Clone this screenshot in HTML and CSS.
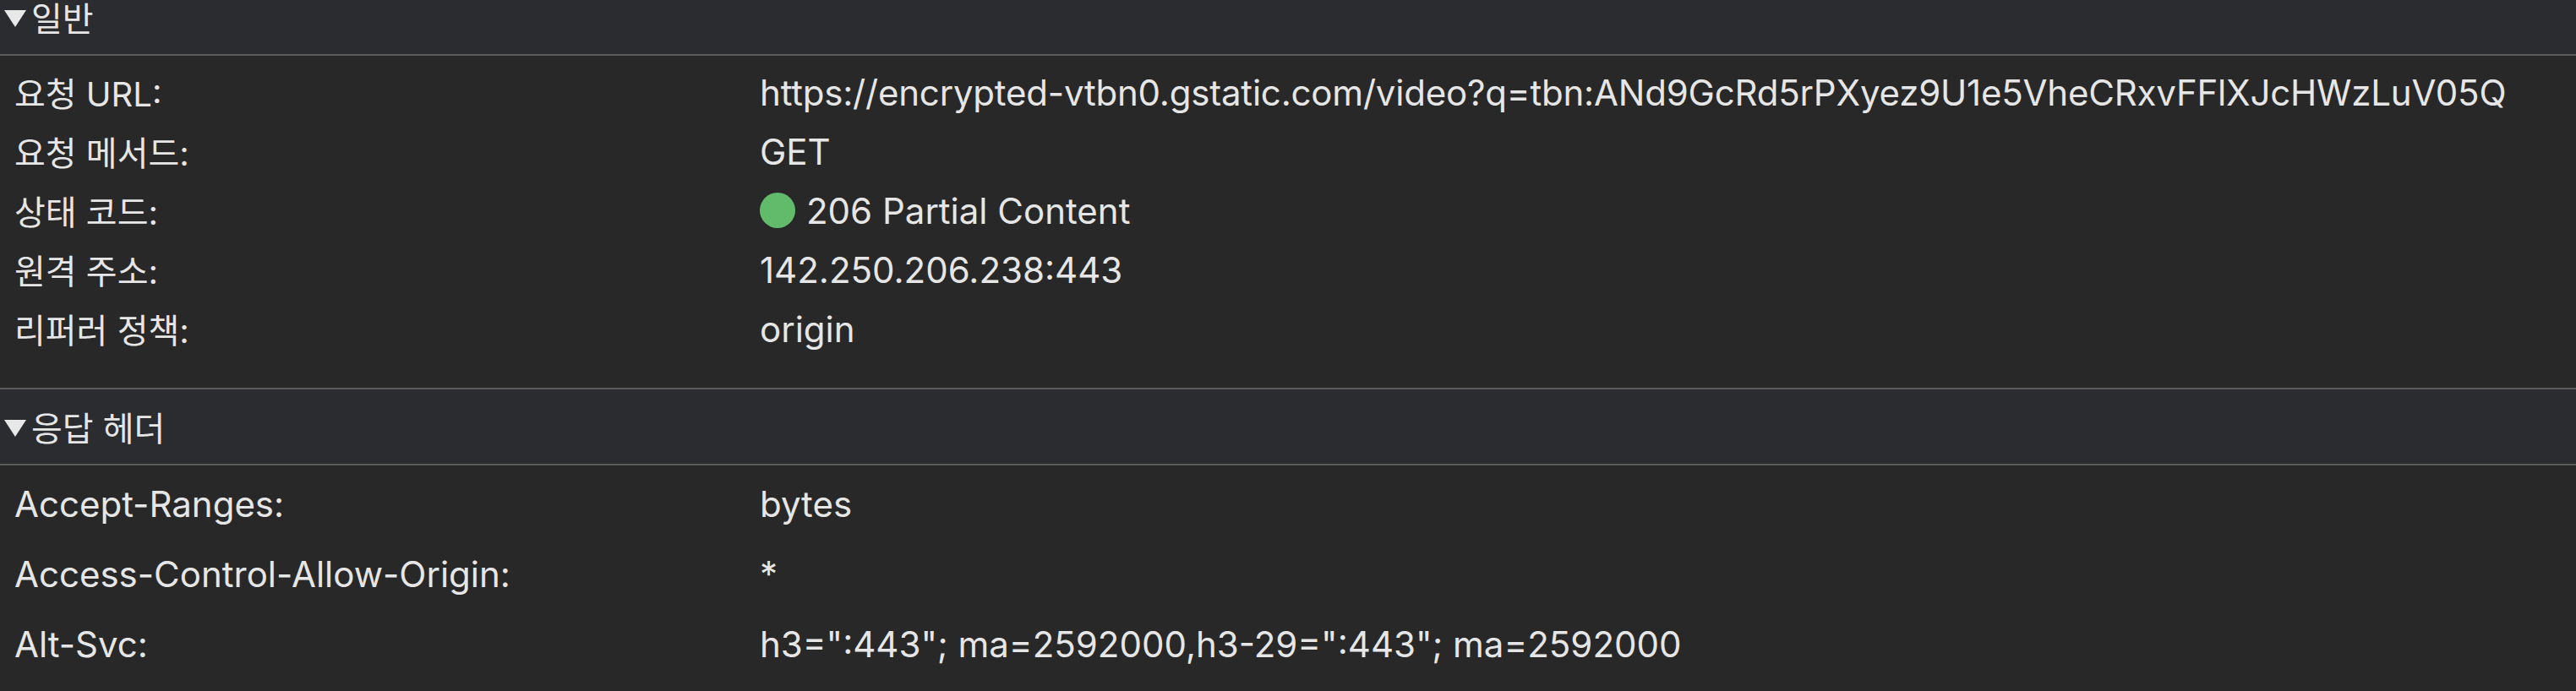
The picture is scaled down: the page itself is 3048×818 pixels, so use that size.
FILE: index.html
```html
<!DOCTYPE html>
<html lang="ko">
<head>
<meta charset="utf-8">
<title>Network details</title>
<link rel="stylesheet" href="styles.css">
</head>
<body>
<div class="panel">
  <section class="sec">
    <div class="sec-head">
      <svg class="tri" viewBox="0 0 26 20" width="26" height="20"><polygon points="0,0 26,0 13,20" fill="#e8e8e8"/></svg>
      <span>일반</span>
    </div>
    <div class="rows general">
      <div class="k ko">요청 URL:</div><div class="v url">https://encrypted-vtbn0.gstatic.com/video?q=tbn:ANd9GcRd5rPXyez9U1e5VheCRxvFFlXJcHWzLuV05Q</div>
      <div class="k ko">요청 메서드:</div><div class="v">GET</div>
      <div class="k ko">상태 코드:</div><div class="v"><span class="dot"></span>206 Partial Content</div>
      <div class="k ko">원격 주소:</div><div class="v">142.250.206.238:443</div>
      <div class="k ko">리퍼러 정책:</div><div class="v">origin</div>
    </div>
  </section>
  <section class="sec">
    <div class="sec-head">
      <svg class="tri" viewBox="0 0 26 20" width="26" height="20"><polygon points="0,0 26,0 13,20" fill="#e8e8e8"/></svg>
      <span>응답 헤더</span>
    </div>
    <div class="rows headers">
      <div class="k">Accept-Ranges:</div><div class="v">bytes</div>
      <div class="k">Access-Control-Allow-Origin:</div><div class="v">*</div>
      <div class="k">Alt-Svc:</div><div class="v">h3=":443"; ma=2592000,h3-29=":443"; ma=2592000</div>
    </div>
  </section>
</div>
</body>
</html>
```
FILE: styles.css
```css
html, body {
  margin: 0;
  padding: 0;
  background: #282828;
  overflow: hidden;
}
body {
  width: 3048px;
  height: 818px;
  font-family: Inter, "Noto Sans CJK KR", sans-serif;
  color: #e6e6e6;
}
.panel {
  margin-top: -24px;
}
.sec-head {
  height: 88px;
  background: #2b2c2f;
  border-bottom: 2px solid #5b5b5b;
  display: flex;
  align-items: center;
  padding-left: 5px;
  gap: 6px;
  font-size: 40px;
  font-family: "Noto Sans CJK KR", sans-serif;
}
.sec-head span {
  line-height: 1;
}
.tri {
  display: block;
  margin-top: 4px;
}
.rows {
  display: grid;
  grid-template-columns: 882px 1fr;
  padding-left: 17px;
  font-size: 42px;
}
.general {
  grid-auto-rows: 70px;
  padding-top: 8px;
  padding-bottom: 35px;
  border-bottom: 2px solid #5b5b5b;
}
.headers {
  grid-auto-rows: 83px;
  padding-top: 4px;
}
.k, .v {
  display: flex;
  align-items: center;
  white-space: nowrap;
}
.k.ko {
  font-size: 40px;
}
.url {
  letter-spacing: -0.2px;
}
.dot {
  width: 42px;
  height: 42px;
  border-radius: 50%;
  background: #62bb6a;
  margin-right: 13px;
}
```
